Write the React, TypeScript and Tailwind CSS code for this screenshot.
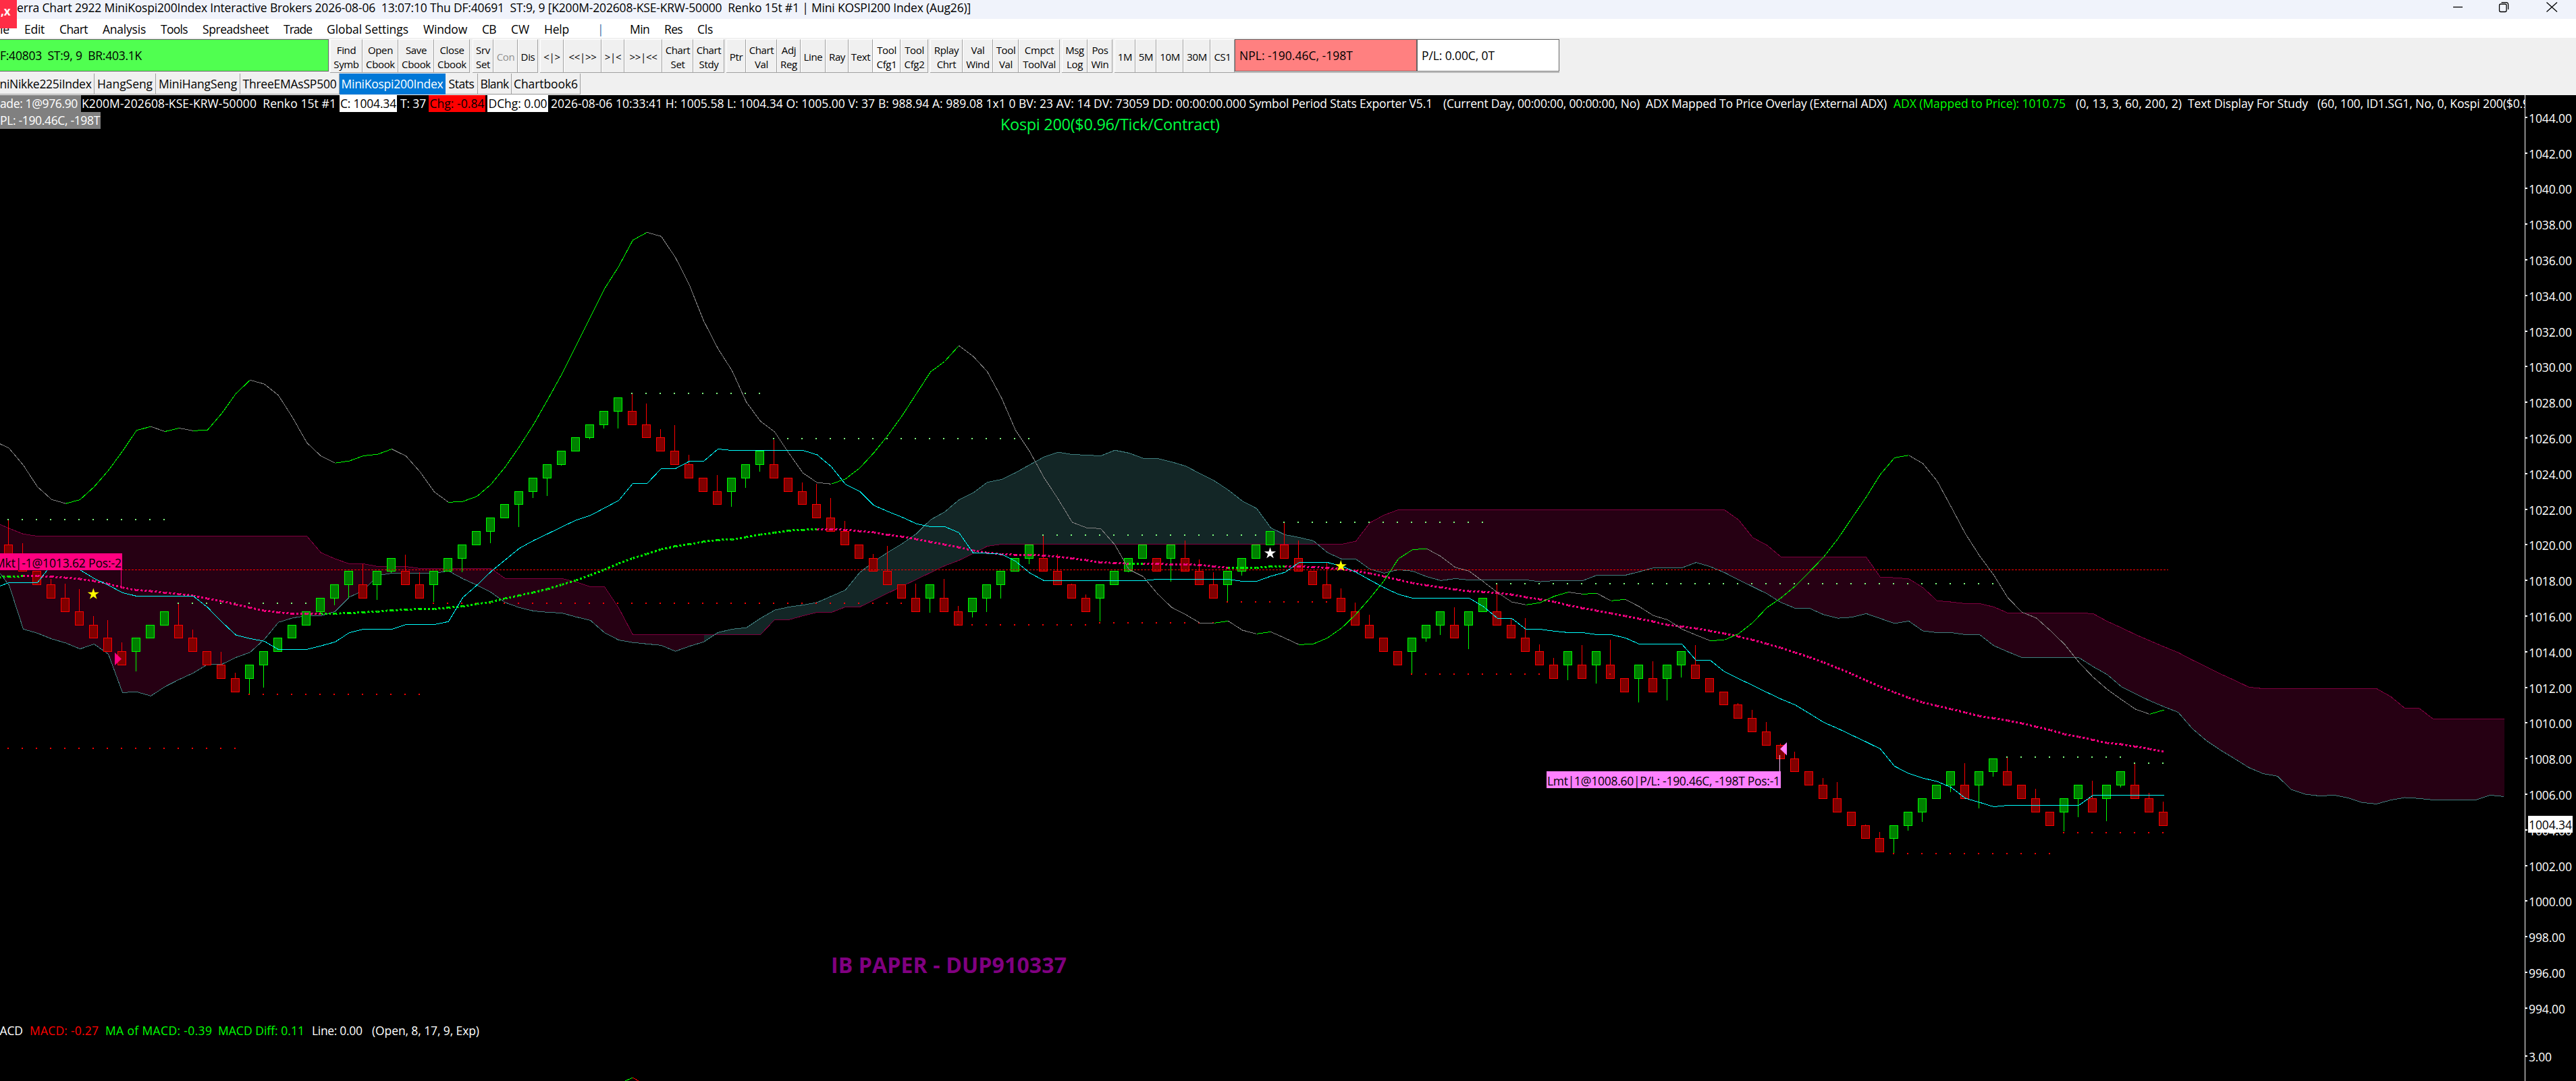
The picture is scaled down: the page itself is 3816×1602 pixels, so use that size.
import { useLayoutEffect, useRef, useState } from 'react';
import clsx from 'clsx';

const FONT = '"Segoe UI", "Open Sans", "Noto Sans", sans-serif';

type Point = [number, number];

// series are written as "bar y bar y ..."; flat or straight stretches are skipped
function parse(data: string): Point[] {
  const nums = data.trim().split(/\s+/).map(Number);
  const out: Point[] = [];
  for (let i = 0; i < nums.length; i += 2) out.push([nums[i], nums[i + 1]]);
  return out;
}

const barX = (bar: number) => 12.5 + bar * 21;
const lineX = (bar: number) => 13.5 + bar * 21;
const levelY = (level: number) => Math.round(589 + level * 19.8) + 0.5;
const priceY = (price: number) => Math.round(649 + (1026 - price) * 26.4);
const toPath = (pts: Point[]) => pts.map(([b, y], i) => `${i ? 'L' : 'M'}${lineX(b)} ${y}`).join('');

// one letter per brick: r = down, g = up, grouped by swing
const BRICKS =
  'rrrrrrrrr' + 'ggg' + 'rrrrr' + 'gggggggg' + 'r' + 'gg' + 'rr' + 'gggggggggggggg' +
  'rrrrrrr' + 'ggg' + 'rrrrrrrrrrr' + 'g' + 'rr' + 'ggggg' + 'rrrr' + 'gggg' + 'r' + 'g' +
  'rrr' + 'gggg' + 'rrrrrrrrr' + 'ggg' + 'r' + 'gg' + 'rrrrr' + 'g' + 'r' + 'g' + 'rr' + 'g' +
  'r' + 'gg' + 'rrrrrrrrrrrrrr' + 'ggggg' + 'r' + 'gg' + 'rrrr' + 'gg' + 'r' + 'gg' + 'rrr';

const WICKS = new Map(
  parse(`0 771 1 805 3 858 4 865 5 873 6 913 7 919 8 952 9 995 12 895 13 933 15 966 16 997 17 1028
  18 1019 22 910 23 897 24 886 25 836 26 889 27 849 28 822 29 848 30 892 32 848 34 805 36 781 37 738
  38 735 39 690 41 651 42 635 43 635 44 584 45 598 46 636 47 630 48 674 50 704 51 751 52 723 53 699
  54 652 56 715 57 717 58 738 59 772 61 821 62 809 64 865 65 908 66 858 67 898 68 915 69 907 70 887
  72 836 73 793 74 821 75 865 76 881 77 921 79 848 80 828 82 862 83 801 84 829 85 848 86 891 87 853
  90 774 91 801 93 834 94 872 95 893 96 911 99 998 100 951 101 941 102 900 103 962 105 866 106 917
  107 916 108 955 109 975 110 1008 111 956 112 1013 113 948 115 1041 116 980 117 1038 118 1004
  119 956 122 1042 123 1052 124 1070 125 1102 126 1114 128 1153 129 1159 131 1222 132 1233 133 1264
  134 1231 135 1218 137 1174 138 1131 139 1198 140 1151 141 1123 143 1169 145 1232 146 1211 147 1157
  148 1217 149 1167 150 1132 151 1175 152 1188`)
);

const ADX = parse(`-1 654 0 664.4 1 689.3 2 721.4 3 740.2 4 746.3 5 740.5 6 721.4 7 697.3 8 668.6 9 637.6
  10 632.2 11 639.5 12 634.5 13 638.4 14 637.2 15 612.7 16 583.2 17 563.3 18 569.1 19 585.9 20 618.8
  21 656 22 675.9 23 686.2 24 683.1 25 675.5 26 673.2 27 665.5 28 675.9 29 699.6 30 729.1 31 744.4
  32 743.2 33 735.6 34 717.6 35 691.9 36 661.7 37 628.8 38 592 39 554 40 512 41 470 42 428 43 394.9
  44 355.8 45 344.4 46 350.3 47 381.4 48 423.1 49 475.7 50 516.5 51 549.4 52 595.7 53 624.3 54 639.9
  55 671.4 56 700.9 57 715.2 58 717.3 59 709.7 60 693.7 61 671 62 644.9 63 615.9 64 583.5 65 551.1
  66 535.5 67 512.3 68 527.9 69 550.6 70 589.4 71 637.8 72 669.3 73 707.6 74 739.6 75 774.1 76 782.1
  77 783.4 78 807.4 79 844 80 854.5 81 879.8 82 900 83 910.9 84 923.1 85 923.3 86 920.3 87 934
  88 939.3 89 936.4 90 945.7 91 955.4 92 954.3 93 945.4 94 930.7 95 910.4 96 886.4 97 860.4 98 828.2
  99 814.6 100 813.2 101 824.6 102 840.7 103 846.4 104 862.1 105 878.2 106 892.1 107 896.4 108 893.2
  109 883.6 110 877.5 111 880.4 112 879.3 113 890.3 114 888.3 115 899 116 912.4 117 918.5 118 932.3
  119 941.1 120 949.5 121 948.4 122 939.2 123 922.7 124 900.5 125 886 126 868.4 127 847.3 128 825.5
  129 798.5 130 767.5 131 736.7 132 703 133 678.4 134 674.7 135 686.9 136 712.7 137 751.4 138 791
  139 823.7 140 852.2 141 886.1 142 907.3 143 915.9 144 934.7 145 955 146 981.2 147 1003.3 148 1021.6
  149 1036.7 150 1051 151 1058.4 152 1052.2`);

const BASE = parse(`-1 871 0 863.5 2 863.5 3 836.6 4 830 5 844.6 6 857.3 7 867.2 8 878.3 9 883.5 13 883.5
  14 900.1 15 921.6 16 941.1 17 946.4 18 950.3 19 962.5 21 962.5 22 957.1 23 951.4 24 937.6 25 932.5
  27 932.5 28 925.5 30 925.5 31 921.2 32 885.6 33 867.2 34 846.9 35 829.7 36 812.5 37 801 38 791
  39 780.7 40 770.8 41 763.9 42 752.8 43 741.7 44 716.5 45 716.5 46 694.5 47 694.5 48 683.5 49 683.5
  50 665.5 51 667.5 56 667.5 57 674 58 691.6 59 717.7 60 728.2 61 748.9 62 758.1 63 766.5 64 776.2
  65 780.5 66 780.5 67 789.3 68 819.2 69 820 70 821.3 71 831.8 72 849 73 860.5 80 860.5 81 858.5
  86 858.5 87 861.5 88 861.5 89 853.9 90 848.2 91 833.5 93 833.5 94 838.9 95 847.9 96 859.6 97 871
  98 880.7 99 886.5 103 886.5 104 898.9 105 916.5 106 916.5 107 932.5 108 932.5 109 935.4 110 937.5
  111 937.5 112 940.5 113 940.5 114 945.3 115 954.5 118 954.5 119 978.5 120 978.5 121 995.4 122 1005.8
  123 1015.7 124 1026.1 125 1036 126 1044.8 127 1057.4 128 1070.5 129 1079.6 130 1089.6 131 1099.5
  132 1109.9 133 1135.5 134 1146.2 135 1153.1 136 1158.1 137 1166.9 138 1183 139 1189.1 140 1195.6
  141 1193.5 146 1193.5 147 1178.5 152 1178.5`);

const TREND = parse(`-1 855.5 0 854.6 1 853.8 2 853.9 3 854.6 4 856.1 5 858 6 861.1 7 865.3 8 870.7 9 874.5
  10 876 11 878.3 12 880.2 13 882.9 14 887.1 15 890.9 16 895.9 17 900.5 18 905.1 19 907.4 20 909.3
  21 909.4 22 909.7 23 909.3 24 908.5 25 907.4 26 906.2 27 904.3 28 903.6 29 902.4 30 902.3 31 900.5
  32 898.6 33 895.1 34 892.1 35 886.7 36 882.5 37 877.9 38 872.9 39 866.4 40 859.9 41 852.3 42 844.2
  43 835 44 827.3 45 820.8 46 814.1 47 809.5 48 806.5 49 802.7 50 800.2 51 799.4 52 796 53 792.2
  54 789.3 55 786.3 56 785.1 57 784.2 58 784.6 59 785.1 60 787.2 61 788.9 62 792.6 63 795.2 64 799
  65 803.2 66 807 67 811.2 68 815.8 69 819.2 70 821.3 71 822.1 72 822.2 73 823.4 74 825.1 75 827.6
  76 830.1 77 833.5 78 834.3 79 835.4 80 835.2 81 835.6 82 836.4 83 836.5 84 837.3 85 839.4 86 841.5
  87 841.4 88 841.3 89 839.6 90 839.3 91 839.6 92 840.4 93 841.4 94 843.6 95 846.1 96 849.6 97 854.3
  98 859.3 99 863.9 100 867.5 101 870.4 102 873.6 103 876.1 104 877.1 105 878.9 106 881.1 107 885
  108 888.2 109 891.8 110 897.1 111 901.4 112 905 113 908.8 114 912.8 115 917 116 921.2 117 926.2
  118 928.5 119 931.2 120 935 121 938.8 122 943.4 123 948.4 124 954.1 125 960.2 126 967.1 127 974
  128 981.7 129 990.1 130 998.9 131 1008.5 132 1017.6 133 1026.1 134 1034.1 135 1041 136 1046
  137 1050.9 138 1055.9 139 1061.3 140 1064.3 141 1067.8 142 1072 143 1077 144 1081.9 145 1088.1
  146 1091.9 147 1096.5 148 1101 149 1103 150 1106.4 151 1109.9 152 1114.1`);

const SPAN_A = parse(`-1 840 0 867.2 1 932.3 2 938.4 3 946.8 4 952.9 5 961.7 6 954.5 7 969.4 8 1026.4 9 1025.3
  10 1031.4 11 1017.6 12 1006.9 13 997.3 14 984.5 15 984.5 16 974.4 17 966.7 18 947.6 19 922.3
  20 915.8 21 912.5 22 912.5 23 906.2 24 884.8 25 875.2 26 852.7 27 849.5 30 849.5 31 846.2 32 857.6
  33 867.2 34 877.9 35 892.9 36 900.5 37 905.5 38 907.4 39 908.5 40 914.3 41 919.3 42 937.6 43 948.5
  44 952.2 45 954.3 46 956.4 47 965.2 48 957.6 49 951.3 50 937.4 51 932.4 52 930.3 53 916.4 54 904.2
  55 899.5 56 896.6 57 892.8 58 883.6 59 874.3 60 848.6 61 832.2 62 818.3 63 805.7 64 791 65 770.3
  66 758.6 67 740.9 68 730.4 69 714.8 70 710.6 71 700.5 72 688.7 73 677.3 74 670.2 75 673.5 76 674.4
  77 675.6 78 667.2 79 671.4 80 679.2 81 679.4 82 684.5 83 690.8 84 701.7 85 712.3 86 726.1 87 742.6
  88 753.5 89 782.1 90 792.5 91 796.4 92 801.4 93 818.9 94 828.5 95 828.5 96 843.6 97 849.3 98 844.3
  99 846.4 100 854.6 101 860.4 102 857.5 103 859.5 107 859.5 108 862.1 109 860.5 111 860.5 112 852.5
  114 852.5 115 847.3 116 841.5 118 841.5 119 833.6 120 839.7 121 848.5 122 859.2 123 869.5 124 879.9
  125 892.9 126 901.5 127 901.5 128 910.9 129 916.2 130 914.7 131 909.3 132 916.6 133 923.9 134 920.4
  135 935 136 937.5 137 937.5 138 940.5 139 940.5 140 956.8 141 966 142 974.5 146 974.5 147 987.8
  148 999.7 149 1017.6 150 1028.4 151 1038.4 152 1047.3 153 1055.5 154 1079.6 155 1097.6 156 1111.8
  157 1124.5 158 1137.6 159 1146.5 160 1150.2 161 1170.2 162 1177.1 163 1179.6 164 1178.4 165 1182.4
  166 1189.4 167 1191.4 168 1185.7 169 1182 170 1183.3 171 1185.5 174 1185.5 175 1178.4 176 1180.4`);

const SPAN_B = parse(`-1 774 0 783 1 791.4 2 794.5 21 794.5 22 819 23 828.2 24 835.5 25 835.5 26 839.5
  28 839.5 29 842.5 34 842.5 35 857.5 39 857.5 40 862.6 41 869.5 42 869.5 43 901 44 940.5 49 940.5
  53 940.5 54 918.5 55 918.5 56 912.6 57 907.5 58 907.5 59 899.5 60 899.5 61 889.4 62 878.9 63 868.8
  64 858.7 65 848.6 66 838.5 67 830.5 68 820.4 69 809.5 70 806.5 92 806.5 94 806.5 95 802.1 96 774.6
  97 763.2 98 755.5 121 755.5 122 770.4 123 796.8 124 807.9 125 825.5 131 825.5 132 855.4 133 856.1
  134 857.7 135 870.7 136 890.2 137 892.1 138 894.5 139 894.5 140 899.4 141 908.5 146 908.5 147 909.3
  148 920.8 149 930.2 150 940.4 151 949.4 152 958.4 153 966.9 154 978 155 988.2 156 998.8 157 1008.2
  158 1018.4 159 1020.5 167 1020.5 168 1032.2 169 1049.5 170 1049.5 171 1065.5 176 1065.5`);

// [first bar, last bar, y]
const RESISTANCE = [
  [0, 11, 770], [12, 21, 894], [44, 53, 583], [54, 72, 650], [73, 88, 793], [90, 104, 774],
  [105, 140, 865], [141, 149, 1122], [150, 152, 1131],
];
const SUPPORT = [
  [0, 16, 1109], [17, 29, 1029], [30, 63, 894], [67, 76, 926], [77, 85, 923], [86, 93, 892],
  [99, 108, 999], [113, 113, 999], [133, 144, 1265], [145, 152, 1234],
];

function Cloud({ from, to, fill }: { from: number; to: number; fill: string }) {
  const inside = ([b]: Point) => b >= from && b <= to;
  const a = SPAN_A.filter(inside);
  const b = SPAN_B.filter(inside).reverse();
  return <path d={`${toPath([...a, ...b])}Z`} fill={fill} />;
}

// every segment is its own path, so a dash pattern starts over at each bar
function TwoTone({ pts, up, down, width, dash }: { pts: Point[]; up: string; down: string; width: number; dash?: string }) {
  return (
    <g fill="none" strokeWidth={width} strokeDasharray={dash}>
      {pts.slice(1).map((p, i) => (
        <path key={i} d={toPath([pts[i], p])} stroke={p[1] < pts[i][1] ? up : down} />
      ))}
    </g>
  );
}

function Candles() {
  let level = 10;
  return (
    <>
      {BRICKS.split('').map((dir, i) => {
        const up = dir === 'g';
        level += up ? -1 : 1;
        const top = levelY(level);
        const bottom = levelY(level + 1);
        const wick = WICKS.get(i);
        return (
          <g key={i} stroke={up ? '#00ff00' : '#ff0000'}>
            {wick && <line x1={barX(i)} x2={barX(i)} y1={up ? bottom : top} y2={wick} />}
            <rect x={barX(i) - 6} y={top} width={12} height={bottom - top} fill={up ? '#008000' : '#800000'} />
          </g>
        );
      })}
    </>
  );
}

function Dots({ rows, fill }: { rows: number[][]; fill: string }) {
  return (
    <g fill={fill}>
      {rows.map(([a, b, y]) =>
        Array.from({ length: b - a + 1 }, (_, n) => (
          <rect key={`${a}-${n}`} x={barX(a + n) - 1.5} y={y - 1} width={2} height={2} />
        ))
      )}
    </g>
  );
}

function Star({ x, y, fill }: { x: number; y: number; fill: string }) {
  const pts = Array.from({ length: 10 }, (_, i) => {
    const r = i % 2 ? 3.4 : 9;
    const t = (Math.PI * i) / 5 - Math.PI / 2;
    return `${(x + r * Math.cos(t)).toFixed(1)},${(y + r * Math.sin(t)).toFixed(1)}`;
  });
  return <polygon points={pts.join(' ')} fill={fill} />;
}

function Label({ x, y, w, size = 17.5, fill, weight, children }: {
  x: number; y: number; w: number; size?: number; fill: string; weight?: number; children: string;
}) {
  return (
    <text x={x} y={y} textLength={w} fontSize={size} fill={fill} fontWeight={weight} stroke="none">
      {children}
    </text>
  );
}

function PriceAxis() {
  const prices = Array.from({ length: 26 }, (_, i) => 1044 - i * 2);
  return (
    <g>
      <rect x={3740} y={141} width={1} height={1461} fill="#fff" />
      {prices.map((p) => (
        <g key={p}>
          <rect x={3741} y={priceY(p) - 1} width={3} height={2} fill="#fff" />
          <Label x={3746} y={priceY(p) + 8} w={p >= 1000 ? 64 : 54} fill="#fff">{p.toFixed(2)}</Label>
        </g>
      ))}
      <rect x={3741} y={1564} width={3} height={2} fill="#fff" />
      <Label x={3746} y={1573} w={34} fill="#fff">3.00</Label>
      <rect x={3745} y={1209} width={66} height={25} fill="#fff" />
      <Label x={3746} y={1229} w={64} fill="#000">1004.34</Label>
    </g>
  );
}

function Chart() {
  return (
    <svg width={3816} height={1461} viewBox="0 141 3816 1461" className="block" fontFamily={FONT}>
      <g shapeRendering="crispEdges">
        <Cloud from={-1} to={49} fill="#260013" />
        <Cloud from={49} to={92} fill="#132626" />
        <Cloud from={92} to={176} fill="#260013" />
        <path d={toPath(SPAN_B)} fill="none" stroke="#80003f" />
        <path d={toPath(SPAN_A)} fill="none" stroke="#408080" />
        <Candles />
        <Dots rows={RESISTANCE} fill="#80ff80" />
        <Dots rows={SUPPORT} fill="#ff0000" />
        <line x1={0} x2={3212} y1={844.5} y2={844.5} stroke="#ff0000" strokeDasharray="3 2" />
        <TwoTone pts={TREND} up="#00ff00" down="#ff0080" width={3} dash="3 3" />
        <TwoTone pts={ADX} up="#00ff00" down="#808080" width={1} />
        <path d={toPath(BASE)} fill="none" stroke="#00ffff" />
        <path d="M926 1602L937.5 1597" fill="none" stroke="#00ff00" />
        <path d="M937.5 1597L946 1602" fill="none" stroke="#ff0000" />
      </g>

      <Star x={138.3} y={880.5} fill="#ffff00" />
      <Star x={1881.5} y={820} fill="#ffffff" />
      <Star x={1986.3} y={839} fill="#ffff00" />

      <rect x={179} y={844} width={1} height={26} fill="#ff0080" />
      <rect x={0} y={820} width={181} height={25} fill="#ff0080" />
      <Label x={-8} y={840.5} w={188} fill="#000">Mkt|-1@1013.62 Pos:-2</Label>
      <path d="M170 967L180 976.5L170 986Z" fill="#ff0080" />

      <rect x={2636} y={1119} width={1} height={25} fill="#ffc0ff" />
      <rect x={2291} y={1143} width={347} height={25} fill="#ff80ff" />
      <Label x={2292} y={1163.5} w={345} fill="#000">Lmt|1@1008.60|P/L: -190.46C, -198T Pos:-1</Label>
      <path d="M2647 1100L2637 1110L2647 1119.5Z" fill="#ff80ff" />

      <Label x={1482} y={192.5} w={325} size={23.5} fill="#00ff40">Kospi 200($0.96/Tick/Contract)</Label>
      <Label x={1231} y={1442} w={349} size={32} weight={700} fill="#800080">IB PAPER - DUP910337</Label>

      <Label x={-16} y={1534} w={50} fill="#fff">MACD</Label>
      <Label x={44} y={1534} w={102} fill="#ff0000">MACD: -0.27</Label>
      <Label x={156} y={1534} w={158} fill="#00ff00">MA of MACD: -0.39</Label>
      <Label x={323} y={1534} w={128} fill="#00ff00">MACD Diff: 0.11</Label>
      <Label x={462} y={1534} w={75} fill="#fff">Line: 0.00</Label>
      <Label x={551} y={1534} w={159} fill="#fff">(Open, 8, 17, 9, Exp)</Label>

      <PriceAxis />
    </svg>
  );
}

// keeps a caption at a set width by spreading the difference over its letters
function Fit({ w, text, className }: { w: number; text: string; className?: string }) {
  const ref = useRef<HTMLSpanElement>(null);
  const [spacing, setSpacing] = useState(0);
  useLayoutEffect(() => {
    if (ref.current) setSpacing((w - ref.current.getBoundingClientRect().width) / text.length);
  }, []);
  return (
    <span ref={ref} className={clsx('shrink-0 whitespace-pre', className)} style={{ letterSpacing: spacing }}>
      {text}
    </span>
  );
}

function TitleBar() {
  return (
    <div className="flex h-[28px] items-start bg-[#f0f3fb] leading-[23px]">
      <Fit className="ml-[25px]" w={1413} text="erra Chart 2922 MiniKospi200Index Interactive Brokers 2026-08-06  13:07:10 Thu DF:40691  ST:9, 9 [K200M-202608-KSE-KRW-50000  Renko 15t #1 | Mini KOSPI200 Index (Aug26)]" />
      <svg width={160} height={22} viewBox="0 0 160 22" className="mr-[24px] ml-auto" fill="none" stroke="#000" strokeWidth={1.3}>
        <path d="M2 10.5H16" />
        <rect x={70.5} y={6} width={10.5} height={11.5} rx={2} />
        <path d="M73.5 3.7H80.5Q83.6 3.7 83.6 7V14" />
        <path d="M140.5 3.5L156 17.5M156 3.5L140.5 17.5" />
      </svg>
    </div>
  );
}

const MENU: [string, number][] = [
  ['le', 14], ['Edit', 30], ['Chart', 42], ['Analysis', 64], ['Tools', 40], ['Spreadsheet', 98], ['Trade', 42],
  ['Global Settings', 121], ['Window', 65], ['CB', 21], ['CW', 27], ['Help', 37], ['|', 6],
];

function MenuBar() {
  return (
    <div className="flex h-[28px] gap-[22px] bg-white leading-[30px]">
      {MENU.map(([text, w]) => (
        <Fit key={text} w={w} text={text} className={text === '|' ? 'ml-[20px] text-[#3a6ea5]' : ''} />
      ))}
      <Fit className="ml-[20px]" w={29} text="Min" />
      <Fit w={27} text="Res" />
      <Fit w={23} text="Cls" />
    </div>
  );
}

function ToolGroup({ children, className = 'mr-[3px]' }: { children: React.ReactNode; className?: string }) {
  return <div className={clsx('flex h-[50px] border-b border-[#a0a0a0]', className)}>{children}</div>;
}

function Tool({ text, className }: { text: string; className: string }) {
  return (
    <button
      className={clsx(
        'flex shrink-0 items-center justify-center overflow-hidden border-t border-r border-l border-t-white border-r-[#a0a0a0] border-l-white pt-[3px] text-center text-[15px] leading-[21px] tracking-[-0.35px] whitespace-pre',
        className
      )}
    >
      {text}
    </button>
  );
}

function Toolbar() {
  return (
    <div className="flex h-[52px] items-start bg-[#f0f0f0] pt-[2px]">
      <div className="flex h-[48px] w-[487px] shrink-0 items-center border-t border-r border-b border-[#646464] bg-[#50ff50]">
        <Fit w={210} text="F:40803  ST:9, 9  BR:403.1K" />
      </div>
      <div className="flex pl-[2px]">
        <ToolGroup className="mr-[4px]">
          <Tool className="w-[48px]" text={'Find\nSymb'} />
          <Tool className="w-[53px]" text={'Open\nCbook'} />
          <Tool className="w-[53px]" text={'Save\nCbook'} />
          <Tool className="w-[53px]" text={'Close\nCbook'} />
        </ToolGroup>
        <ToolGroup>
          <Tool className="w-[31px]" text={'Srv\nSet'} />
          <Tool className="w-[36px] text-[#909090]" text="Con" />
          <Tool className="w-[30px]" text="Dis" />
        </ToolGroup>
        <ToolGroup>
          <Tool className="w-[35px]" text="<|>" />
          <Tool className="w-[56px]" text="<<|>>" />
          <Tool className="w-[34px]" text=">|<" />
          <Tool className="w-[56px]" text=">>|<<" />
          <Tool className="w-[46px]" text={'Chart\nSet'} />
          <Tool className="w-[46px]" text={'Chart\nStdy'} />
        </ToolGroup>
        <ToolGroup>
          <Tool className="w-[29px]" text="Ptr" />
          <Tool className="w-[46px]" text={'Chart\nVal'} />
          <Tool className="w-[35px]" text={'Adj\nReg'} />
          <Tool className="w-[37px]" text="Line" />
          <Tool className="w-[34px]" text="Ray" />
          <Tool className="w-[36px]" text="Text" />
          <Tool className="w-[41px] border-t-[#808080] border-l-[#808080] bg-[#f8f8f8]" text={'Tool\nCfg1'} />
          <Tool className="w-[41px]" text={'Tool\nCfg2'} />
        </ToolGroup>
        <ToolGroup>
          <Tool className="w-[48px]" text={'Rplay\nChrt'} />
          <Tool className="w-[45px]" text={'Val\nWind'} />
          <Tool className="w-[38px]" text={'Tool\nVal'} />
          <Tool className="w-[61px]" text={'Cmpct\nToolVal'} />
        </ToolGroup>
        <ToolGroup>
          <Tool className="w-[38px]" text={'Msg\nLog'} />
          <Tool className="w-[37px]" text={'Pos\nWin'} />
        </ToolGroup>
        <ToolGroup className="mr-0">
          <Tool className="w-[31px]" text="1M" />
          <Tool className="w-[31px]" text="5M" />
          <Tool className="w-[40px]" text="10M" />
          <Tool className="w-[40px]" text="30M" />
          <Tool className="w-[36px]" text="CS1" />
          <div className="flex h-[48px] w-[270px] items-center border border-[#646464] bg-[#ff8080] pl-[6px]">
            <Fit w={168} text="NPL: -190.46C, -198T" />
          </div>
          <div className="flex h-[48px] w-[211px] items-center border border-[#646464] bg-white pl-[6px]">
            <Fit w={108} text="P/L: 0.00C, 0T" />
          </div>
        </ToolGroup>
      </div>
    </div>
  );
}

const TABS = [
  { text: 'niNikke225iIndex', w: 136, box: 'w-[140px] pr-[4px]' },
  { text: 'HangSeng', w: 82, box: 'w-[91px]' },
  { text: 'MiniHangSeng', w: 116, box: 'w-[125px]' },
  { text: 'ThreeEMAsSP500', w: 139, box: 'w-[147px]' },
  { text: 'MiniKospi200Index', w: 151, box: 'w-[157px]', active: true },
  { text: 'Stats', w: 38, box: 'w-[48px]' },
  { text: 'Blank', w: 42, box: 'w-[50px]' },
  { text: 'Chartbook6', w: 95, box: 'w-[102px]' },
];

function Tabs() {
  return (
    <div className="flex h-[33px] items-start bg-[#f0f0f0] pt-[1px]">
      {TABS.map((t) => (
        <div
          key={t.text}
          className={clsx(
            'flex h-[31px] shrink-0 items-center justify-center border-r border-b',
            t.box,
            t.active ? 'border-[#0078d7] bg-[#0078d7] text-white' : 'border-[#a0a0a0]'
          )}
        >
          <Fit w={t.w} text={t.text} />
        </div>
      ))}
    </div>
  );
}

function Legend() {
  return (
    <div className="absolute top-0 left-0 w-[3740px] overflow-hidden leading-[25px] text-white">
      <div className="flex h-[25px]">
        <div className="flex w-[120px] shrink-0 bg-[#808080]">
          <Fit w={115} text="ade: 1@976.90" />
        </div>
        <Fit className="ml-[1px]" w={377} text="K200M-202608-KSE-KRW-50000  Renko 15t #1" />
        <div className="ml-[5px] flex w-[85px] shrink-0 justify-center bg-white text-black">
          <Fit w={83} text="C: 1004.34" />
        </div>
        <Fit className="ml-[5px]" w={38} text="T: 37" />
        <div className="ml-[4px] flex w-[84px] shrink-0 justify-center bg-[#ff0000] text-black">
          <Fit w={81} text="Chg: -0.84" />
        </div>
        <div className="ml-[3px] flex w-[90px] shrink-0 justify-center bg-white text-black">
          <Fit w={87} text="DChg: 0.00" />
        </div>
        <Fit className="ml-[4px]" w={480} text="2026-08-06 10:33:41 H: 1005.58 L: 1004.34 O: 1005.00 V: 37" />
        <Fit className="ml-[5px]" w={545} text="B: 988.94 A: 989.08 1x1 0 BV: 23 AV: 14 DV: 73059 DD: 00:00:00.000" />
        <Fit className="ml-[4px]" w={272} text="Symbol Period Stats Exporter V5.1" />
        <Fit className="ml-[16px]" w={291} text="(Current Day, 00:00:00, 00:00:00, No)" />
        <Fit className="ml-[9px]" w={357} text="ADX Mapped To Price Overlay (External ADX)" />
        <Fit className="ml-[10px] text-[#00ff00]" w={255} text="ADX (Mapped to Price): 1010.75" />
        <Fit className="ml-[15px]" w={157} text="(0, 13, 3, 60, 200, 2)" />
        <Fit className="ml-[9px]" w={178} text="Text Display For Study" />
        <Fit className="ml-[14px]" w={314} text="(60, 100, ID1.SG1, No, 0, Kospi 200($0.9" />
      </div>
      <div className="flex h-[25px] w-[149px] bg-[#808080]">
        <Fit w={148} text="PL: -190.46C, -198T" />
      </div>
    </div>
  );
}

export default function App() {
  return (
    <div className="relative flex h-[1602px] w-[3816px] flex-col overflow-hidden bg-black font-['Segoe_UI','Open_Sans','Noto_Sans',sans-serif] text-[17.5px] text-black">
      <TitleBar />
      <MenuBar />
      <Toolbar />
      <Tabs />
      <div className="relative h-[1461px] shrink-0 bg-black">
        <Chart />
        <Legend />
      </div>
      {/* notification flag overlapping the window corner */}
      <div className="absolute top-0 left-0 flex h-[42px] w-[25px] items-center bg-[#ff2d46] pb-[10px] pl-[1px] text-[17px] leading-none font-bold text-white">
        ,x
      </div>
    </div>
  );
}
